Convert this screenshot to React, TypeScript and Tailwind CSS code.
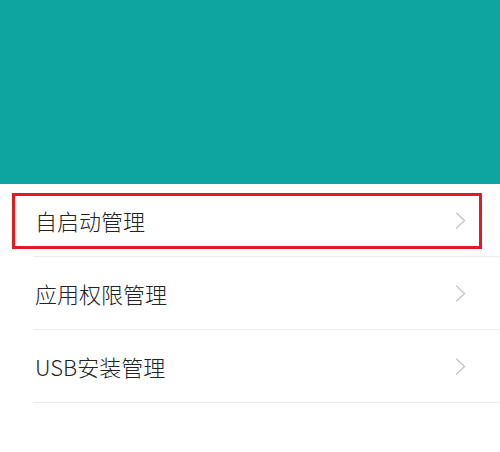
import { ReactNode } from "react";

const items = ["自启动管理", "应用权限管理", "USB安装管理"];

function Chevron() {
    return (
        <svg width="11" height="17" viewBox="0 0 11 17" fill="none">
            <path d="M1.5 1 L9.5 8.5 L1.5 16" stroke="#c4c4c4" strokeWidth="1.3" strokeLinecap="round" strokeLinejoin="round" />
        </svg>
    );
}

function Row({ children }: { children: ReactNode }) {
    return (
        <div className="flex h-[73px] items-center justify-between border-b border-[#ececec] pl-[2px] pr-[34px]">
            <span className="pt-[1px] text-[22px] font-light text-[#222222]">{children}</span>
            <Chevron />
        </div>
    );
}

export default function App() {
    return (
        <main
            className="relative h-[452px] w-[500px] overflow-hidden bg-white"
            style={{ fontFamily: '"Noto Sans CJK SC", sans-serif' }}
        >
            <div className="h-[184px] bg-[#0ea4a0]" />
            <div className="pl-[33px]">
                {items.map((item) => (
                    <Row key={item}>{item}</Row>
                ))}
            </div>
            <div className="absolute left-[12px] top-[193px] h-[56px] w-[470px] border-[3px] border-[#e01c22]" />
        </main>
    );
}
